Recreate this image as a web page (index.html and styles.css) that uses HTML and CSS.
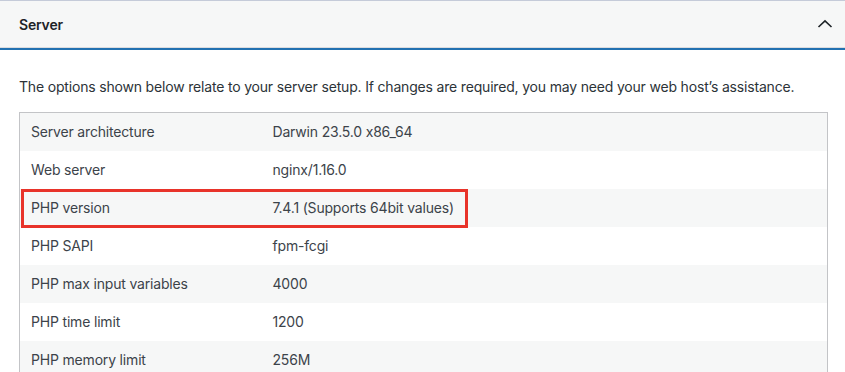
FILE: index.html
```html
<!DOCTYPE html>
<html lang="en">
<head>
  <meta charset="UTF-8">
  <title>Site Health - Server</title>
  <link rel="stylesheet" href="styles.css">
</head>
<body>
  <div class="panel">
    <div class="panel-header">
      <h3>Server</h3>
      <svg class="chevron" width="16" height="9" viewBox="0 0 16 9">
        <path d="M1.5 8 L8 1.8 L14.5 8" fill="none" stroke="#1d2327" stroke-width="1.6"/>
      </svg>
    </div>

    <div class="panel-body">
      <p class="intro">The options shown below relate to your server setup. If changes are required, you may need your web host’s assistance.</p>

      <div class="table-wrap">
        <table class="info-table">
          <tr><td>Server architecture</td><td>Darwin 23.5.0 x86_64</td></tr>
          <tr><td>Web server</td><td>nginx/1.16.0</td></tr>
          <tr><td>PHP version</td><td>7.4.1 (Supports 64bit values)</td></tr>
          <tr><td>PHP SAPI</td><td>fpm-fcgi</td></tr>
          <tr><td>PHP max input variables</td><td>4000</td></tr>
          <tr><td>PHP time limit</td><td>1200</td></tr>
          <tr><td>PHP memory limit</td><td>256M</td></tr>
        </table>
        <div class="highlight"></div> <!-- annotation box -->
      </div>
    </div>
  </div>
</body>
</html>
```

FILE: styles.css
```css
* {
  margin: 0;
  padding: 0;
  box-sizing: border-box;
}

body {
  background-color: #fff;
  color: #3c434a;
  font-family: 'Inter', 'Noto Sans', sans-serif;
  font-size: 14px;
  letter-spacing: -0.18px;
}

.panel-header {
  height: 48px;
  display: flex;
  align-items: center;
  justify-content: space-between;
  padding: 0 12px 0 19px;
  background-color: #f6f7f7;
  border-top: 1px solid #c5cbd9;
  border-bottom: 1px solid #dcdcde;
  box-shadow: 0 2px 0 #2271b1;
}

.panel-header h3 {
  font-size: 14px;
  font-weight: 600;
  color: #1d2327;
}

.chevron {
  margin-top: -2px;
}

.panel-body {
  padding: 29px 17px 0 19px;
}

.intro {
  line-height: 20px;
  color: #2c3338;
  margin-bottom: 15px;
}

.table-wrap {
  position: relative;
}

.info-table {
  width: 100%;
  border-collapse: collapse;
  border: 1px solid #c3c4c7;
}

.info-table td {
  height: 38px;
  padding: 0 12px 0 11px;
  vertical-align: middle;
}

.info-table td:first-child {
  width: 242px;
}

.info-table tr:nth-child(odd) {
  background-color: #f6f7f7;
}

.highlight {
  position: absolute;
  left: 2px;
  top: 77px;
  width: 447px;
  height: 39px;
  border: 3px solid #e8332a;
  pointer-events: none;
}
```
